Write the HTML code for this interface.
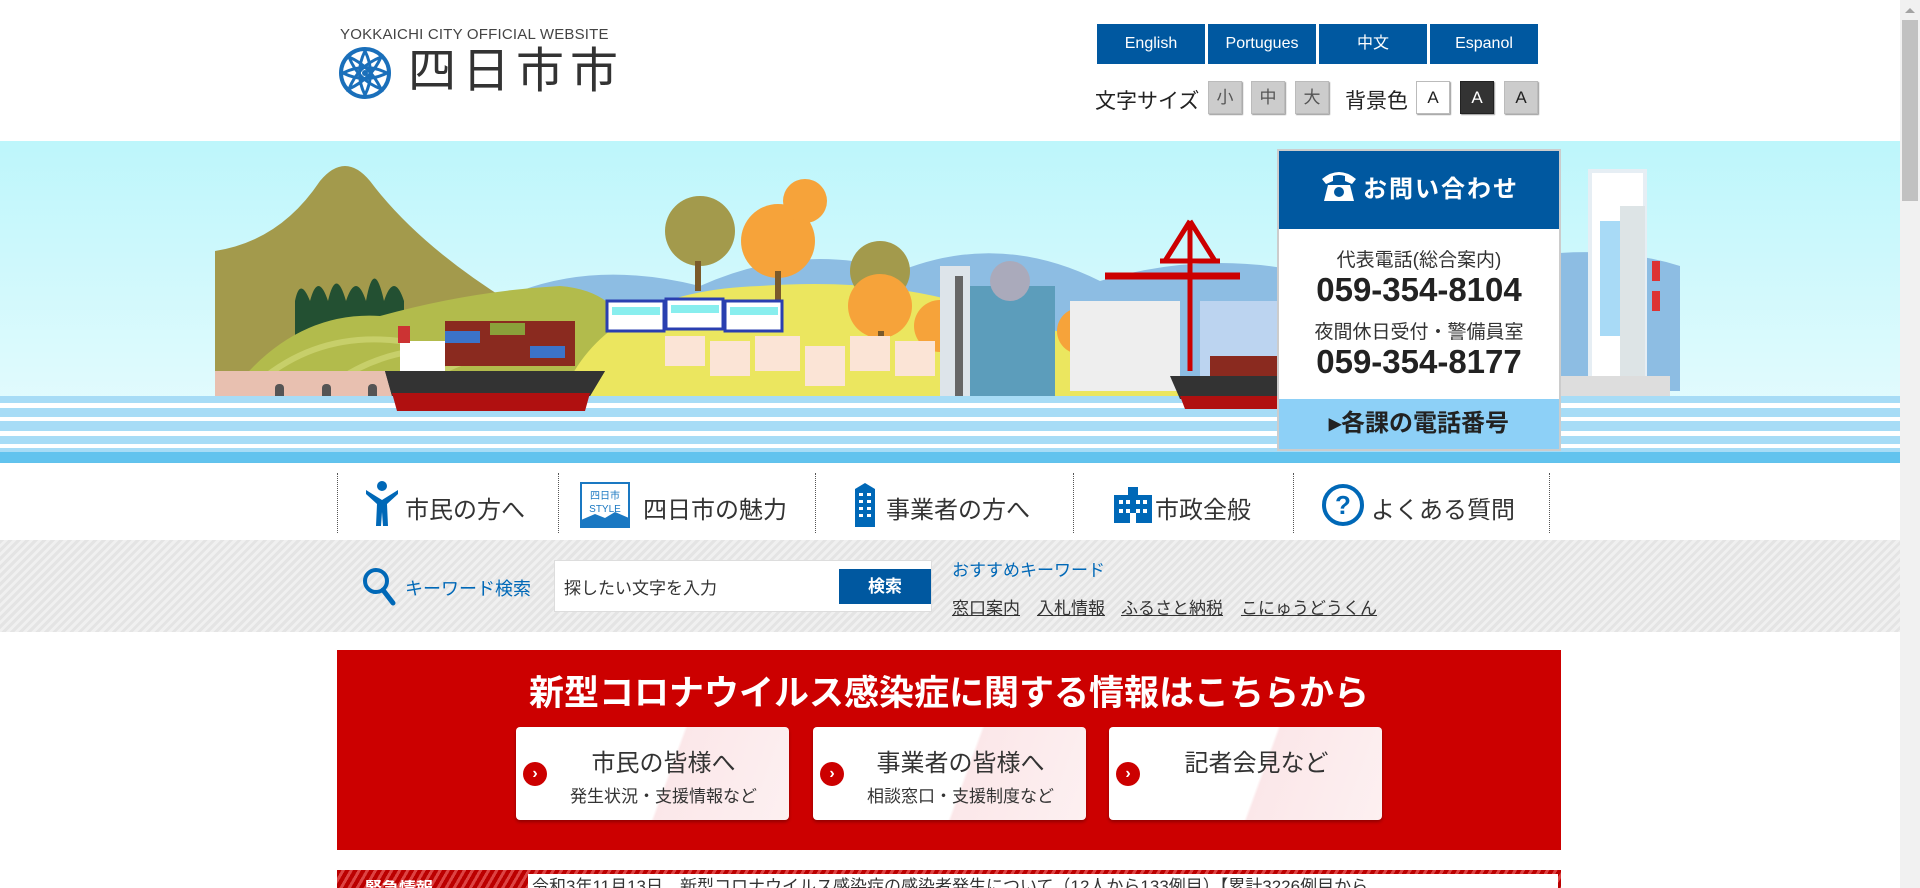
<!DOCTYPE html>
<html><head><meta charset="utf-8">
<style>
*{margin:0;padding:0;box-sizing:border-box}
body{width:1920px;height:888px;overflow:hidden;background:#fff;font-family:"Liberation Sans","Noto Sans CJK JP",sans-serif;color:#333;position:relative}
.a{position:absolute}
.lang{position:absolute;top:24px;height:40px;width:108px;background:#0058a0;color:#fff;font-size:16px;text-align:center;line-height:40px}
.fs{position:absolute;top:81px;height:33px;width:34px;background:#ccc;border:1px solid #bbb;color:#555;font-size:17px;text-align:center;line-height:31px;box-shadow:1px 1px 1px #999}
.nav{position:absolute;top:473px;height:60px;border-left:1px dotted #555}
.navt{position:absolute;top:490px;font-size:24px;color:#333;white-space:nowrap}
.card{position:absolute;top:727px;width:273px;height:93px;border-radius:4px;background:linear-gradient(110deg,#fff 0%,#fff 55%,#fbe7e9 56%,#fdf0f1 100%);box-shadow:0 2px 3px rgba(0,0,0,.3);text-align:center}
.card .t{font-size:24px;color:#333;margin-top:16px;padding-left:22px}
.card .s{font-size:17px;color:#333;margin-top:4px;padding-left:22px}
.card .c{position:absolute;left:7px;top:35px;width:24px;height:24px;border-radius:50%;background:#c00;color:#fff;font-size:16px;font-weight:bold;line-height:24px;text-align:center}
.kw{position:absolute;top:594px;font-size:17px;color:#333;text-decoration:underline}
</style></head><body>

<div class="a" style="left:340px;top:26px;font-size:15px;color:#444;letter-spacing:.2px">YOKKAICHI CITY OFFICIAL WEBSITE</div>
<svg class="a" style="left:338px;top:46px" width="54" height="54" viewBox="0 0 54 54">
<circle cx="27" cy="27" r="24" fill="none" stroke="#1a6fba" stroke-width="4"/>
<g fill="none" stroke="#1a6fba" stroke-width="3">
<path d="M27 5 Q38 27 27 49 Q16 27 27 5Z"/><path d="M5 27 Q27 16 49 27 Q27 38 5 27Z"/>
<path d="M11 11 Q32 20 43 43 Q20 34 11 11Z"/><path d="M43 11 Q34 32 11 43 Q20 20 43 11Z"/>
</g><circle cx="27" cy="27" r="3" fill="#1a6fba"/></svg>
<div class="a" style="left:408px;top:44px;font-size:48px;color:#333;letter-spacing:6px;line-height:56px">四日市市</div>

<div class="lang" style="left:1097px">English</div>
<div class="lang" style="left:1208px">Portugues</div>
<div class="lang" style="left:1319px">中文</div>
<div class="lang" style="left:1430px">Espanol</div>

<div class="a" style="left:1095px;top:85px;font-size:21px;color:#222">文字サイズ</div>
<div class="fs" style="left:1208px">小</div>
<div class="fs" style="left:1251px">中</div>
<div class="fs" style="left:1295px">大</div>
<div class="a" style="left:1345px;top:85px;font-size:21px;color:#222">背景色</div>
<div class="fs" style="left:1416px;background:#fff;color:#222">A</div>
<div class="fs" style="left:1460px;background:#333;color:#fff;border-color:#222">A</div>
<div class="fs" style="left:1504px;background:#ccc;color:#222">A</div>

<svg class="a" style="left:0;top:141px" width="1900" height="322" viewBox="0 0 1900 322">
<defs>
<linearGradient id="sky" x1="0" y1="0" x2="0" y2="1"><stop offset="0" stop-color="#bdf6fb"/><stop offset="1" stop-color="#eafcfe"/></linearGradient>
</defs>
<rect width="1900" height="322" fill="url(#sky)"/>
<path d="M520 150 Q600 120 700 145 Q800 100 900 130 Q1000 90 1100 140 Q1200 110 1300 130 Q1400 100 1500 120 Q1600 100 1680 125 L1680 250 L520 250Z" fill="#8dbde3"/>
<path d="M215 110 Q280 100 320 40 Q345 10 370 40 Q430 120 560 190 L560 245 L215 245Z" fill="#a39a4c"/>
<path d="M295 160 Q300 135 310 160 Q318 130 328 160 Q336 125 346 160 Q356 130 366 160 Q374 115 384 160 Q394 130 404 160 L404 230 L295 230Z" fill="#235032"/>
<path d="M240 240 Q300 170 380 175 Q470 150 560 145 Q620 150 630 200 L630 290 L240 290Z" fill="#b2bb4c"/>
<path d="M260 240 Q320 190 400 200 M330 245 Q390 200 470 210 M410 250 Q470 205 560 205" stroke="#c7cf6a" stroke-width="6" fill="none"/>
<rect x="215" y="230" width="330" height="45" fill="#e8c0b0"/>
<g fill="#555"><rect x="275" y="243" width="9" height="22" rx="4"/><rect x="322" y="243" width="9" height="22" rx="4"/><rect x="368" y="243" width="9" height="22" rx="4"/></g>
<path d="M560 260 Q600 150 760 145 Q900 135 1000 175 Q1100 200 1180 230 L1180 270 L560 270Z" fill="#ebe65f"/>
<path d="M540 262 L1200 255 L1200 275 L540 275Z" fill="#f3e8c8"/>
<g fill="#a39a4c"><circle cx="700" cy="90" r="35"/><circle cx="880" cy="130" r="30"/><circle cx="1115" cy="190" r="25"/></g>
<g fill="#f6a33a"><circle cx="778" cy="100" r="37"/><circle cx="880" cy="165" r="32"/><circle cx="940" cy="185" r="26"/><circle cx="1080" cy="190" r="23"/><circle cx="805" cy="60" r="22"/></g>
<g fill="#7a5a2a"><rect x="695" y="120" width="6" height="30"/><rect x="775" y="130" width="6" height="30"/><rect x="878" y="190" width="6" height="25"/></g>
<g><rect x="607" y="160" width="57" height="30" fill="#fff" stroke="#2a3fb0" stroke-width="3"/><rect x="666" y="158" width="57" height="30" fill="#fff" stroke="#2a3fb0" stroke-width="3"/><rect x="725" y="160" width="57" height="30" fill="#fff" stroke="#2a3fb0" stroke-width="3"/>
<rect x="612" y="166" width="48" height="8" fill="#8ee"/><rect x="671" y="164" width="48" height="8" fill="#8ee"/><rect x="730" y="166" width="48" height="8" fill="#8ee"/></g>
<g fill="#fbe4d6"><rect x="665" y="195" width="40" height="30"/><rect x="710" y="200" width="40" height="35"/><rect x="755" y="195" width="45" height="35"/><rect x="805" y="205" width="40" height="40"/><rect x="850" y="195" width="40" height="35"/><rect x="895" y="200" width="40" height="35"/></g>
<rect x="940" y="125" width="30" height="145" fill="#dde4ea"/><rect x="955" y="135" width="8" height="125" fill="#666"/>
<rect x="970" y="145" width="85" height="125" fill="#5c9dbb"/><circle cx="1010" cy="140" r="20" fill="#aab"/>
<rect x="1070" y="160" width="110" height="90" fill="#eee"/>
<path d="M1190 80 L1190 230 M1160 120 L1220 120 M1190 80 L1165 120 M1190 80 L1215 120" stroke="#c00" stroke-width="5" fill="none"/>
<path d="M1105 135 L1240 135" stroke="#c00" stroke-width="7"/>
<rect x="1200" y="160" width="80" height="90" fill="#bcd4f0"/>
<rect x="1590" y="30" width="55" height="220" fill="#fff" stroke="#e6eef4" stroke-width="4"/>
<rect x="1600" y="80" width="40" height="115" fill="#a8daf6"/>
<rect x="1620" y="65" width="25" height="170" fill="#dde4e6"/>
<g fill="#d33"><rect x="1652" y="120" width="8" height="20"/><rect x="1652" y="150" width="8" height="20"/></g>
<rect x="1470" y="235" width="200" height="25" fill="#ddd"/>
<rect x="445" y="180" width="130" height="45" fill="#8a2a1f"/>
<rect x="445" y="190" width="35" height="12" fill="#3b73c9"/><rect x="490" y="182" width="35" height="12" fill="#8aa03a"/><rect x="530" y="205" width="35" height="12" fill="#3b73c9"/>
<rect x="400" y="200" width="45" height="30" fill="#fff"/><rect x="398" y="185" width="12" height="17" fill="#c33"/>
<path d="M385 230 L605 230 L590 255 L392 255Z" fill="#333"/><path d="M392 252 L590 252 L585 270 L397 270Z" fill="#b01010"/>
<rect x="1210" y="215" width="90" height="20" fill="#8a2a1f"/>
<path d="M1090 255 L1160 255 L1155 275 L1095 275Z" fill="#f4f4f4"/><rect x="1093" y="275" width="62" height="6" fill="#b01010"/>
<rect x="0" y="255" width="1900" height="67" fill="#a7dcf6"/>
<g fill="#fff"><rect x="0" y="262" width="1900" height="5"/><rect x="0" y="276" width="1900" height="4"/><rect x="0" y="290" width="1900" height="5"/><rect x="0" y="303" width="1900" height="4"/></g>
<rect x="0" y="311" width="1900" height="11" fill="#62c3ee"/>
<path d="M385 230 L605 230 L590 255 L392 255Z" fill="#333"/><path d="M392 252 L590 252 L585 270 L397 270Z" fill="#b01010"/>
<path d="M1170 235 L1300 235 L1290 258 L1180 258Z" fill="#333"/><path d="M1180 255 L1290 255 L1285 268 L1185 268Z" fill="#b01010"/>
</svg>

<div class="a" style="left:1277px;top:149px;width:284px;height:302px;background:#fff;border:2px solid #ccc">
<div style="height:78px;background:#0058a0;color:#fff;font-size:24px;font-weight:bold;line-height:78px;text-align:center;letter-spacing:2px">
<svg width="40" height="36" viewBox="0 0 40 36" style="vertical-align:-6px;margin-right:4px"><path d="M3 12 Q20 -2 37 12 L33 17 L26 14 L26 9 Q20 7 14 9 L14 14 L7 17Z" fill="#fff"/><path d="M9 18 L31 18 L35 34 L5 34Z" fill="#fff"/><circle cx="20" cy="25" r="5" fill="#0058a0"/></svg>お問い合わせ</div>
<div style="text-align:center;font-size:19px;margin-top:16px;color:#333">代表電話(総合案内)</div>
<div style="text-align:center;font-size:33px;font-weight:bold;color:#222;line-height:36px">059-354-8104</div>
<div style="text-align:center;font-size:19px;margin-top:9px;color:#333">夜間休日受付・警備員室</div>
<div style="text-align:center;font-size:33px;font-weight:bold;color:#222;line-height:36px">059-354-8177</div>
<div style="position:absolute;left:0;right:0;bottom:0;height:50px;background:#8dd0f7;text-align:center;font-size:24px;font-weight:bold;line-height:50px;color:#222">▸各課の電話番号</div>
</div>

<div class="a" style="left:0;top:463px;width:1900px;height:77px;background:#fff;box-shadow:0 3px 4px rgba(0,0,0,.15)"></div>
<div class="nav" style="left:337px"></div><div class="nav" style="left:558px"></div><div class="nav" style="left:815px"></div><div class="nav" style="left:1073px"></div><div class="nav" style="left:1293px"></div><div class="nav" style="left:1549px"></div>
<svg class="a" style="left:364px;top:480px" width="36" height="46" viewBox="0 0 36 46"><circle cx="18" cy="6" r="5" fill="#0068b7"/><path d="M2 10 L18 20 L34 10 L34 14 L23 24 L24 46 L19 46 L18 32 L17 46 L12 46 L13 24 L2 14Z" fill="#0068b7"/></svg>
<div class="navt" style="left:405px">市民の方へ</div>
<svg class="a" style="left:580px;top:482px" width="50" height="46" viewBox="0 0 50 46"><rect x="1" y="1" width="48" height="44" fill="#fff" stroke="#1a78c2" stroke-width="2"/><text x="25" y="17" font-size="10" fill="#1a78c2" text-anchor="middle" font-family="Noto Sans CJK JP">四日市</text><text x="25" y="30" font-size="10" fill="#1a78c2" text-anchor="middle" font-family="Liberation Sans">STYLE</text><path d="M1 38 L15 32 L25 36 L35 30 L49 36 L49 45 L1 45Z" fill="#1a78c2"/></svg>
<div class="navt" style="left:643px">四日市の魅力</div>
<svg class="a" style="left:852px;top:483px" width="26" height="44" viewBox="0 0 26 44"><path d="M3 6 L13 0 L23 6 L23 44 L3 44Z" fill="#0068b7"/><g fill="#fff"><rect x="7" y="10" width="4" height="3"/><rect x="15" y="10" width="4" height="3"/><rect x="7" y="17" width="4" height="3"/><rect x="15" y="17" width="4" height="3"/><rect x="7" y="24" width="4" height="3"/><rect x="15" y="24" width="4" height="3"/><rect x="7" y="31" width="4" height="3"/><rect x="15" y="31" width="4" height="3"/></g></svg>
<div class="navt" style="left:886px">事業者の方へ</div>
<svg class="a" style="left:1112px;top:487px" width="42" height="36" viewBox="0 0 42 36"><rect x="16" y="0" width="10" height="8" fill="#0068b7"/><rect x="2" y="8" width="38" height="28" fill="#0068b7"/><g fill="#fff"><rect x="7" y="13" width="4" height="4"/><rect x="14" y="13" width="4" height="4"/><rect x="24" y="13" width="4" height="4"/><rect x="31" y="13" width="4" height="4"/><rect x="7" y="22" width="4" height="4"/><rect x="14" y="22" width="4" height="4"/><rect x="24" y="22" width="4" height="4"/><rect x="31" y="22" width="4" height="4"/><rect x="18" y="26" width="6" height="10"/></g></svg>
<div class="navt" style="left:1155px">市政全般</div>
<svg class="a" style="left:1321px;top:483px" width="44" height="44" viewBox="0 0 44 44"><circle cx="22" cy="22" r="19" fill="none" stroke="#0068b7" stroke-width="4"/><text x="22" y="31" font-size="26" font-weight="bold" fill="#0068b7" text-anchor="middle" font-family="Liberation Sans">?</text></svg>
<div class="navt" style="left:1371px">よくある質問</div>

<div class="a" style="left:0;top:540px;width:1900px;height:92px;background:repeating-linear-gradient(135deg,#e4e4e4 0,#e4e4e4 3px,#f0f0f0 3px,#f0f0f0 6px)"></div>
<svg class="a" style="left:362px;top:567px" width="36" height="40" viewBox="0 0 36 40"><circle cx="14" cy="14" r="11" fill="none" stroke="#0068b7" stroke-width="4"/><path d="M21 23 L31 36" stroke="#0068b7" stroke-width="5" stroke-linecap="round"/></svg>
<div class="a" style="left:405px;top:575px;font-size:18px;color:#0068b7">キーワード検索</div>
<div class="a" style="left:554px;top:560px;width:378px;height:52px;background:#fff;border:1px solid #ddd"></div>
<div class="a" style="left:564px;top:574px;font-size:17px;color:#333">探したい文字を入力</div>
<div class="a" style="left:839px;top:569px;width:92px;height:35px;background:#0058a0;color:#fff;font-size:17px;font-weight:bold;text-align:center;line-height:35px">検索</div>
<div class="a" style="left:952px;top:556px;font-size:17px;color:#0068b7">おすすめキーワード</div>
<div class="kw" style="left:952px">窓口案内</div>
<div class="kw" style="left:1037px">入札情報</div>
<div class="kw" style="left:1121px">ふるさと納税</div>
<div class="kw" style="left:1241px">こにゅうどうくん</div>

<div class="a" style="left:337px;top:650px;width:1224px;height:200px;background:#cc0000"></div>
<div class="a" style="left:337px;top:665px;width:1224px;text-align:center;font-size:35px;font-weight:bold;color:#fff">新型コロナウイルス感染症に関する情報はこちらから</div>
<div class="card" style="left:516px"><div class="c">›</div><div class="t">市民の皆様へ</div><div class="s">発生状況・支援情報など</div></div>
<div class="card" style="left:813px"><div class="c">›</div><div class="t">事業者の皆様へ</div><div class="s">相談窓口・支援制度など</div></div>
<div class="card" style="left:1109px"><div class="c">›</div><div class="t">記者会見など</div></div>

<div class="a" style="left:337px;top:870px;width:1224px;height:18px;background:repeating-linear-gradient(120deg,#b00 0,#b00 4px,#d44 4px,#d44 7px)"></div>
<div class="a" style="left:528px;top:874px;width:1030px;height:14px;background:#fff;overflow:hidden"><div style="font-size:17px;color:#333;line-height:17px;margin-top:4px;padding-left:4px;white-space:nowrap">令和3年11月13日　新型コロナウイルス感染症の感染者発生について（12人から133例目）【累計3226例目から</div></div>
<div class="a" style="left:365px;top:880px;font-size:17px;font-weight:bold;color:#fff;line-height:17px;overflow:hidden;height:8px">緊急情報</div>

<div class="a" style="left:1900px;top:0;width:20px;height:888px;background:#f1f1f1"></div>
<div class="a" style="left:1902px;top:20px;width:16px;height:181px;background:#c1c1c1"></div>
<div class="a" style="left:1905px;top:8px;width:0;height:0;border-left:5px solid transparent;border-right:5px solid transparent;border-bottom:5px solid #a3a3a3"></div>
</body></html>
